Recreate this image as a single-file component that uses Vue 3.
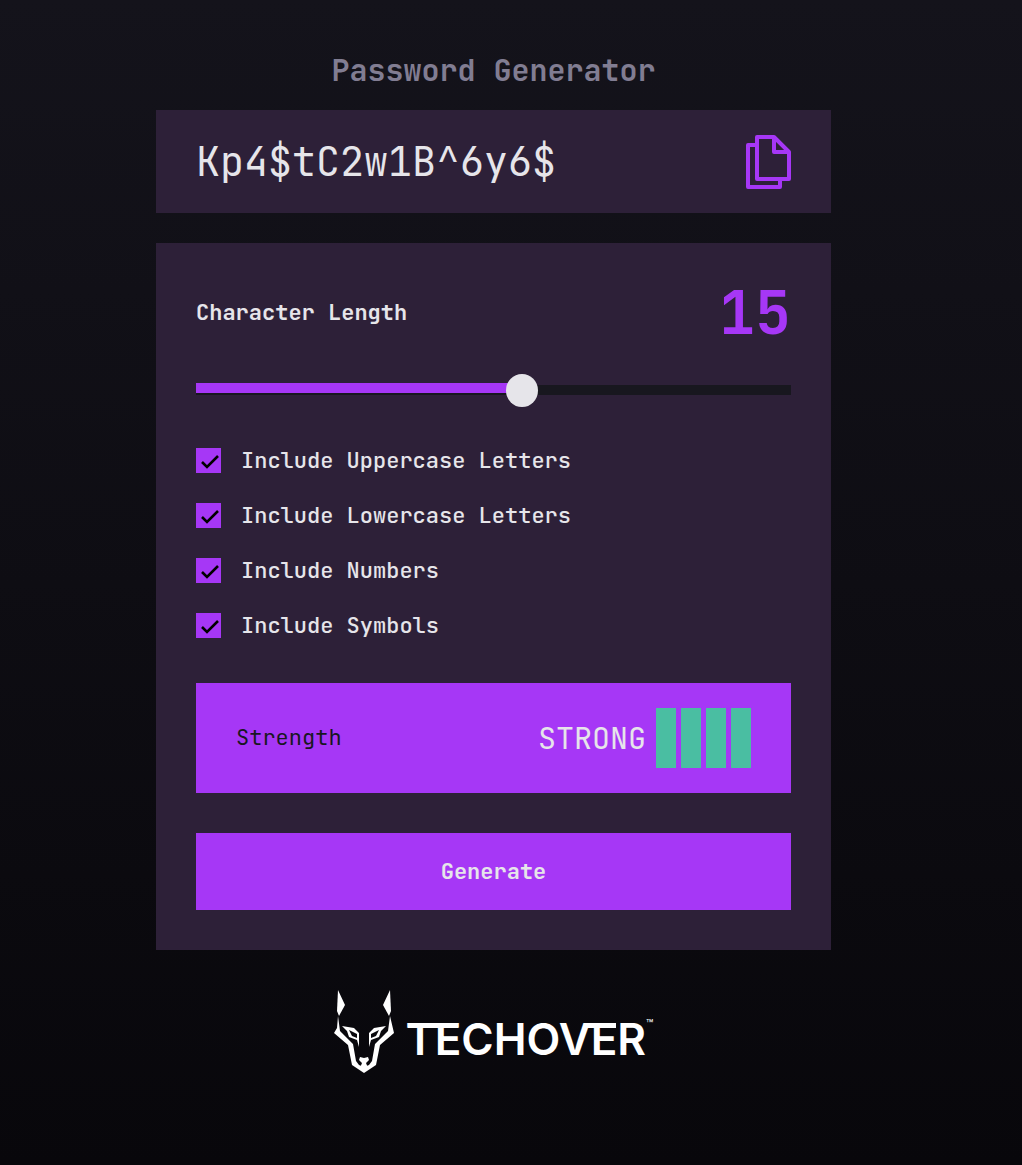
<script setup>
import { computed, reactive, ref } from 'vue'

const min = 4
const max = 24
const length = ref(15)
const password = ref('Kp4$tC2w1B^6y6$')

const options = reactive([
  { id: 'upper', label: 'Include Uppercase Letters', chars: 'ABCDEFGHIJKLMNOPQRSTUVWXYZ', on: true },
  { id: 'lower', label: 'Include Lowercase Letters', chars: 'abcdefghijklmnopqrstuvwxyz', on: true },
  { id: 'numbers', label: 'Include Numbers', chars: '0123456789', on: true },
  { id: 'symbols', label: 'Include Symbols', chars: '!@#$%^&*()', on: true }
])

const filled = computed(() => ((length.value - min) / (max - min)) * 100)
const score = computed(() => options.filter((o) => o.on).length)
const strength = computed(() => ['NONE', 'POOR', 'WEAK', 'MEDIUM', 'STRONG'][score.value])

function generate() {
  const pool = options.filter((o) => o.on).map((o) => o.chars).join('')
  let out = ''
  for (let i = 0; pool && i < length.value; i++) out += pool[Math.floor(Math.random() * pool.length)]
  password.value = out
}

function copy() {
  navigator.clipboard?.writeText(password.value)
}
</script>

<template>
  <div class="page">
    <main class="generator">
      <h1 class="title">Password Generator</h1>

      <section class="output">
        <input v-model="password" class="password" type="text" readonly aria-label="Generated password" />
        <button class="copy" type="button" aria-label="Copy password" @click="copy">
          <svg width="45" height="55" viewBox="0 0 45 55" fill="none" stroke="#a637f6" stroke-width="4" stroke-linejoin="round">
            <path d="M10 11H2V53H34V44" />
            <path d="M11 3H28L43 18V45H11Z" />
            <path d="M28 3V18H43" />
          </svg>
        </button>
      </section>

      <form class="card" @submit.prevent="generate">
        <div class="length">
          <label for="length">Character Length</label>
          <output class="count" for="length">{{ length }}</output>
        </div>
        <input
          id="length"
          v-model.number="length"
          class="slider"
          type="range"
          :min="min"
          :max="max"
          :style="{ '--filled': filled + '%' }"
        />

        <ul class="options">
          <li v-for="option in options" :key="option.id">
            <label class="option">
              <span class="box">
                <input v-model="option.on" type="checkbox" />
                <svg v-if="option.on" width="25" height="25" viewBox="0 0 25 25" fill="none" stroke="#000" stroke-width="2.6">
                  <path d="M6 14L11 19L22 8" />
                </svg>
              </span>
              {{ option.label }}
            </label>
          </li>
        </ul>

        <div class="strength">
          <span class="caption">Strength</span>
          <span class="level">{{ strength }}</span>
          <span class="bars">
            <i v-for="n in 4" :key="n" :class="{ on: n <= score }"></i>
          </span>
        </div>

        <button class="generate" type="submit">Generate</button>
      </form>

      <footer class="brand">
        <svg class="wolf" width="60" height="84" viewBox="0 0 60 84" fill="#fff">
          <path d="M4 0L11 15L5 26L3 21Z" />
          <path d="M56 0L49 15L55 26L57 21Z" />
          <path d="M4 26L6 41L19 54L22 71L25 75L30 77L35 75L38 71L41 54L54 41L56 26L60 43L46 55L42 75L30 83L18 75L14 55L0 43L3 38Z" />
          <path fill-rule="evenodd" d="M8 36L20 38L25 43V57L23 50L15 47L13 41ZM15 40L18 46L23 48V44Z" />
          <path fill-rule="evenodd" d="M52 36L40 38L35 43V57L37 50L45 47L47 41ZM45 40L42 46L37 48V44Z" />
          <path d="M26 67L30 68L34 67L35 70L32 73L34 78H26L28 73L25 70Z" />
        </svg>
        <span class="name">TECHOVER</span>
        <span class="mark">™</span>
      </footer>
    </main>
  </div>
</template>

<style>
body {
  margin: 0;
  background: #08070b;
}
</style>

<style scoped>
* {
  box-sizing: border-box;
}
.page {
  min-height: 100vh;
  padding: 50px 35px 50px 0;
  background: linear-gradient(#14131b, #08070b);
  color: #e6e5ea;
  font: 22px/30px "JetBrains Mono", "DejaVu Sans Mono", monospace;
}
.generator {
  max-width: 675px;
  margin: 0 auto;
}
.title {
  margin: 0 0 20px;
  color: #817d92;
  font-size: 30px;
  font-weight: 700;
  line-height: 40px;
  text-align: center;
}
.output {
  display: flex;
  align-items: center;
  gap: 20px;
  margin-bottom: 30px;
  padding: 24px 40px;
  background: #2d2038;
}
.password {
  flex: 1;
  min-width: 0;
  height: 55px;
  padding: 0;
  border: 0;
  outline: 0;
  background: none;
  color: inherit;
  font: inherit;
  font-size: 40px;
}
.copy {
  display: flex;
  padding: 0;
  border: 0;
  background: none;
  cursor: pointer;
}
.card {
  display: flex;
  flex-direction: column;
  padding: 40px;
  background: #2d2038;
}
.length {
  display: flex;
  align-items: center;
  justify-content: space-between;
  margin-bottom: 40px;
  font-weight: 700;
}
.count {
  color: #a637f6;
  font-size: 60px;
  line-height: 60px;
}
.slider {
  width: 100%;
  height: 12px;
  margin: 0 0 53px;
  appearance: none;
  background:
    linear-gradient(#a637f6, #a637f6) 0 0 / var(--filled) 10px no-repeat,
    linear-gradient(#18171f, #18171f) 0 2px / 100% 10px no-repeat;
}
.slider::-webkit-slider-runnable-track {
  height: 12px;
}
.slider::-webkit-slider-thumb {
  width: 32px;
  height: 33px;
  margin-top: -9px;
  appearance: none;
  border-radius: 50%;
  background: #e6e5ea;
}
.options {
  display: grid;
  gap: 30px;
  margin: 0 0 45px;
  padding: 0;
  font-weight: 500;
  list-style: none;
}
.option {
  display: flex;
  align-items: center;
  gap: 20px;
  height: 25px;
}
.box {
  display: grid;
}
.box > * {
  grid-area: 1 / 1;
}
.box input {
  width: 25px;
  height: 25px;
  margin: 0;
  appearance: none;
  background: #a637f6;
}
.box svg {
  pointer-events: none;
}
.strength {
  display: flex;
  align-items: center;
  gap: 10px;
  margin-bottom: 40px;
  padding: 25px 40px;
  background: #a637f6;
}
.caption {
  margin-right: auto;
  color: #18171f;
}
.level {
  font-size: 30px;
}
.bars {
  display: flex;
  gap: 5px;
}
.bars i {
  width: 20px;
  height: 60px;
}
.bars .on {
  background: #4abea2;
}
.generate {
  height: 77px;
  border: 0;
  background: #a637f6;
  color: inherit;
  font: inherit;
  font-weight: 700;
}
.brand {
  display: flex;
  justify-content: center;
  margin-top: 40px;
  color: #fff;
  font-family: Inter, sans-serif;
}
.name {
  margin-left: 12px;
  background:
    linear-gradient(#fff, #fff) 2px 33px / 50px 5px no-repeat,
    linear-gradient(#fff, #fff) 180px 33px / 30px 5px no-repeat;
  font-size: 44px;
  font-weight: 600;
  line-height: 98px;
}
.mark {
  margin-top: 24px;
  font-size: 12px;
  line-height: 20px;
}
</style>
